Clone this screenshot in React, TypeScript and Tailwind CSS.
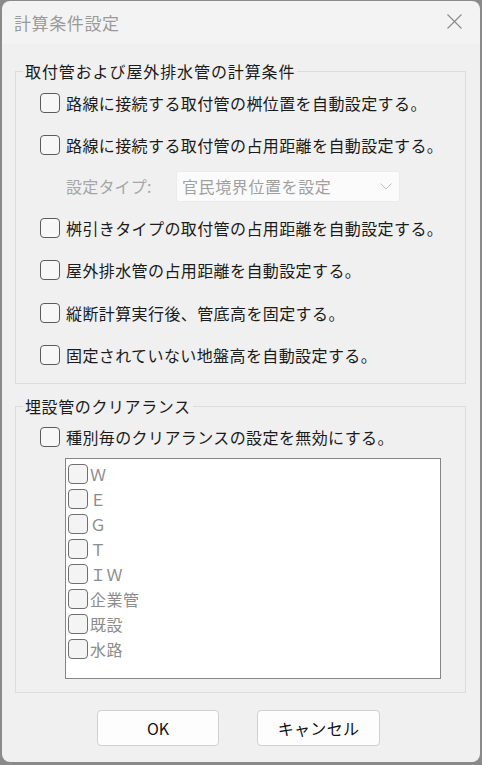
import React from "react";

const font = "font-['Noto_Sans_CJK_JP','Noto_Sans',sans-serif]";

function Box({ light }: { light?: boolean }) {
  return (
    <span
      className={
        "block w-[20px] h-[20px] rounded-[4px] border shrink-0 " +
        (light ? "border-[#6f6f6f] bg-[#f4f4f4]" : "border-[#5c5c5c] bg-[#f7f7f7]")
      }
    />
  );
}

function CheckRow({ label, h }: { label: string; h: string }) {
  return (
    <div className={"flex items-center gap-[6px] " + h}>
      <Box />
      <span className="text-[16px] leading-[20px] tracking-[0.4px] text-[#1b1b1b]">{label}</span>
    </div>
  );
}

const kinds = ["Ｗ", "Ｅ", "Ｇ", "Ｔ", "ＩＷ", "企業管", "既設", "水路"];

export default function App() {
  return (
    <div className={"h-[765px] bg-[#8a8a8a] pl-[2px] pr-[2px] pt-[1px] " + font}>
      <div className="h-[761px] flex flex-col rounded-[8px] overflow-hidden">
        {/* title bar */}
        <div className="h-[43px] bg-[#f3f3f3] flex items-center justify-between pl-[12px] pr-[18px]">
          <span className="text-[17px] leading-[20px] tracking-[0.6px] text-[#9a9a9a]">計算条件設定</span>
          <svg width="15" height="15" viewBox="0 0 15 15" className="mt-[-2px]">
            <path d="M0.5 0.5 L14.5 14.5 M14.5 0.5 L0.5 14.5" stroke="#8a8a8a" strokeWidth="1.1" fill="none" />
          </svg>
        </div>

        <div className="flex-1 bg-[#f0f0f0] flex flex-col">
          {/* group 1 */}
          <fieldset className="mt-[17px] ml-[13px] w-[451px] border border-[#dcdcdc] pl-[7px] pb-[7px]">
            <legend className="px-[2px] text-[16px] leading-[20px] tracking-[0.9px] text-[#1b1b1b]">
              取付管および屋外排水管の計算条件
            </legend>
            <div className="ml-[17px] flex flex-col">
              <CheckRow h="h-[44px]" label="路線に接続する取付管の桝位置を自動設定する。" />
              <CheckRow h="h-[40px]" label="路線に接続する取付管の占用距離を自動設定する。" />
              <div className="h-[42px] ml-[26px] flex items-center">
                <span className="w-[110px] text-[16px] leading-[20px] tracking-[0.2px] text-[#a6a6a6]">設定タイプ:</span>
                <div className="w-[224px] h-[31px] bg-[#fbfbfb] border border-[#ebebeb] rounded-[2px] flex items-center justify-between pl-[5px] pr-[7px]">
                  <span className="text-[16px] leading-[20px] tracking-[0.6px] text-[#a0a0a0]">官民境界位置を設定</span>
                  <svg width="12" height="7" viewBox="0 0 12 7">
                    <path d="M0.5 0.5 L6 6 L11.5 0.5" stroke="#bdbdbd" strokeWidth="1" fill="none" />
                  </svg>
                </div>
              </div>
              <CheckRow h="h-[42px]" label="桝引きタイプの取付管の占用距離を自動設定する。" />
              <CheckRow h="h-[42px]" label="屋外排水管の占用距離を自動設定する。" />
              <CheckRow h="h-[43px]" label="縦断計算実行後、管底高を固定する。" />
              <CheckRow h="h-[42px]" label="固定されていない地盤高を自動設定する。" />
            </div>
          </fieldset>

          {/* group 2 */}
          <fieldset className="mt-[12px] ml-[13px] w-[451px] border border-[#dcdcdc] pl-[7px] pb-[13px]">
            <legend className="px-[2px] text-[16px] leading-[20px] tracking-[0.6px] text-[#1b1b1b]">
              埋設管のクリアランス
            </legend>
            <div className="ml-[17px] flex flex-col">
              <CheckRow h="h-[42px]" label="種別毎のクリアランスの設定を無効にする。" />
              <div className="ml-[25px] w-[376px] h-[221px] bg-white border border-[#858585] pl-[2px] pt-[2px] flex flex-col">
                {kinds.map((k) => (
                  <div key={k} className="h-[25px] flex items-center gap-[2px]">
                    <Box light />
                    <span className="text-[16px] leading-[20px] tracking-[0.5px] text-[#8c8c8c]">{k}</span>
                  </div>
                ))}
              </div>
            </div>
          </fieldset>

          {/* buttons */}
          <div className="mt-[17px] flex pl-[95px] gap-[38px]">
            <button className="w-[122px] h-[36px] bg-[#fdfdfd] border border-[#d0d0d0] rounded-[4px] text-[16px] text-[#111]">
              OK
            </button>
            <button className="w-[123px] h-[36px] bg-[#fdfdfd] border border-[#d0d0d0] rounded-[4px] text-[16px] tracking-[0.3px] text-[#111]">
              キャンセル
            </button>
          </div>
        </div>
      </div>
    </div>
  );
}
